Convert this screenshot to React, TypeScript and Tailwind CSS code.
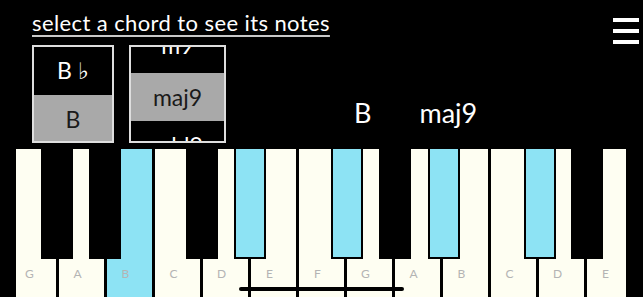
const whiteKeys = ["G", "A", "B", "C", "D", "E", "F", "G", "A", "B", "C", "D", "E"];

// black keys, left offset inside the keyboard frame, highlighted = note in chord
const blackKeys = [
  { pos: "left-[25px]", on: false },
  { pos: "left-[73px]", on: false },
  { pos: "left-[170px]", on: false },
  { pos: "left-[218px]", on: true },
  { pos: "left-[315px]", on: true },
  { pos: "left-[363px]", on: false },
  { pos: "left-[412px]", on: true },
  { pos: "left-[508px]", on: true },
  { pos: "left-[555px]", on: false },
];

function Picker({
  rows,
  active,
  width,
  offset,
  firstRow = "",
}: {
  rows: React.ReactNode[];
  active: number;
  width: string;
  offset: string;
  firstRow?: string;
}) {
  return (
    <div className={`${width} h-[98px] border-2 border-[#dedede] overflow-hidden`}>
      <div className={`flex flex-col ${offset}`}>
        {rows.map((r, i) => (
          <div
            key={i}
            className={`h-[48px] shrink-0 flex items-center justify-center text-[23px] ${
              i === active ? "bg-[#a9a9a9] text-[#1a1a1a]" : "bg-black text-white"
            } ${i === 0 ? firstRow : ""}`}
          >
            {r}
          </div>
        ))}
      </div>
    </div>
  );
}

export default function App() {
  return (
    <div className="w-[643px] h-[297px] bg-black overflow-hidden relative flex flex-col font-['Lato','Open_Sans',sans-serif]">
      <div className="flex items-start justify-between h-[45px] shrink-0">
        <span className="ml-[32px] mt-[10px] text-[22px] leading-[26px] tracking-[0.4px] text-white underline decoration-2 decoration-[#c8c8c8] underline-offset-[4px]">
          select a chord to see its notes
        </span>
        <div className="mt-[18px] mr-[4px] flex flex-col gap-[7px]">
          <div className="w-[26px] h-[4px] bg-white" />
          <div className="w-[26px] h-[4px] bg-white" />
          <div className="w-[26px] h-[4px] bg-white" />
        </div>
      </div>

      <div className="flex items-start h-[98px] shrink-0">
        <div className="ml-[32px]">
          <Picker
            rows={[
              <span key="bb">
                B <span className="font-['DejaVu_Sans',sans-serif] font-light text-white">♭</span>
              </span>,
              "B",
            ]}
            active={1}
            width="w-[82px]"
            offset="mt-0"
          />
        </div>
        <div className="ml-[15px]">
          <Picker
            rows={["m9", "maj9", "add9"]}
            active={1}
            width="w-[97px]"
            offset="mt-[-22px]"
            firstRow="pb-[8px]"
          />
        </div>
        <div className="ml-[128px] mt-[52px] flex text-[27px] leading-[32px] text-white">
          <span>B</span>
          <span className="ml-[48px]">maj9</span>
        </div>
      </div>

      <div className="mt-[6px] ml-[16px] w-[610px] h-[148px] relative overflow-hidden shrink-0">
        <div className="flex gap-[3px] ml-[-5px] h-full">
          {whiteKeys.map((k, i) => (
            <div
              key={i}
              className={`w-[45px] shrink-0 h-full flex flex-col justify-end ${
                i === 2 ? "bg-[#8de3f4]" : "bg-[#fefef2]"
              }`}
            >
              <div className="h-[46px] flex items-center justify-center pr-[8px] text-[12px] text-[#b4b4b4]">
                {k}
              </div>
            </div>
          ))}
        </div>
        {blackKeys.map((b, i) => (
          <div
            key={i}
            className={`absolute top-0 ${b.pos} w-[32px] h-[110px] ${
              b.on ? "bg-[#8de3f4] border-x-2 border-b-2 border-black" : "bg-black"
            }`}
          />
        ))}
      </div>

      <div className="absolute left-[239px] top-[287px] w-[165px] h-[4px] rounded-full bg-black" />
    </div>
  );
}
